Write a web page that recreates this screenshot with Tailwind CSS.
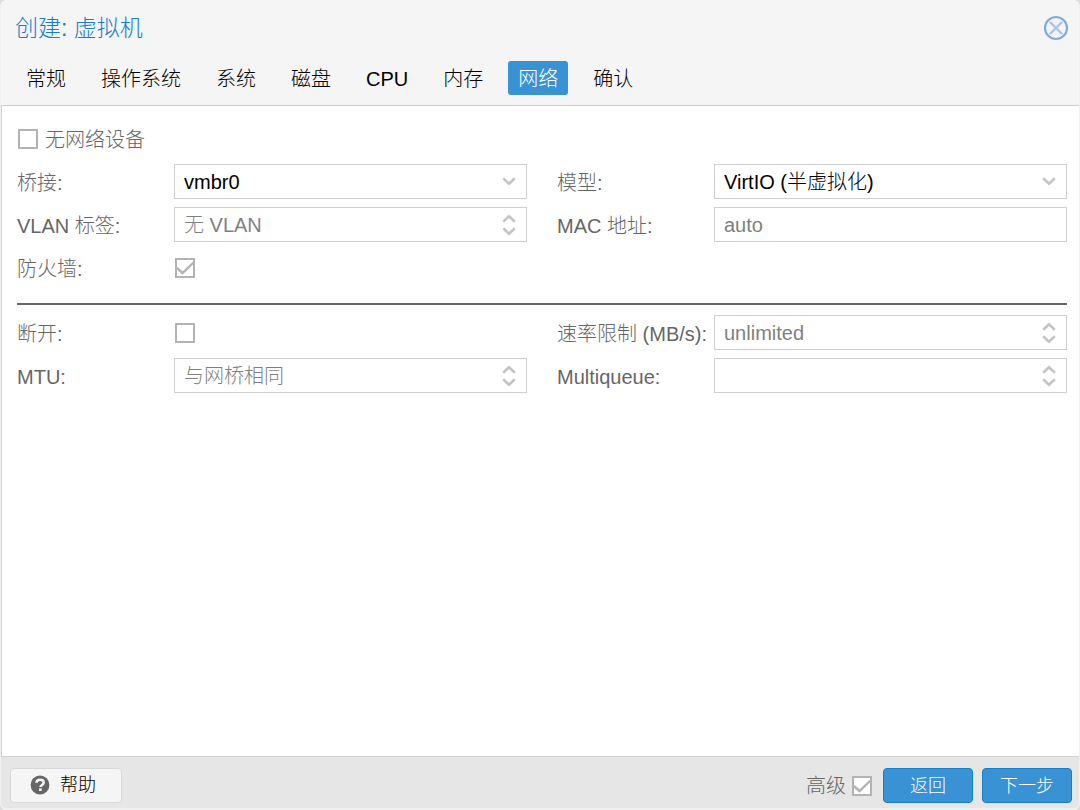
<!DOCTYPE html>
<html lang="zh-CN">
<head>
  <meta charset="UTF-8" />
  <meta name="viewport" content="width=device-width, initial-scale=1.0" />
  <title>创建: 虚拟机</title>
  <script src="https://cdn.jsdelivr.net/npm/@tailwindcss/browser@4"></script>
</head>
<body class="bg-[#dcdcdc] font-['Liberation_Sans','Noto_Sans_CJK_SC',sans-serif] font-light text-xl text-[#666]">
  <!-- shared glyphs -->
  <svg class="hidden">
    <symbol id="down" viewBox="0 0 14 9"><path d="M1.200 1.200 7 6.800l5.800-5.600" fill="none" stroke="currentColor" stroke-width="2.600" /></symbol>
    <symbol id="up" viewBox="0 0 14 9"><path d="M1.200 7.800 7 2.200l5.800 5.600" fill="none" stroke="currentColor" stroke-width="2.600" /></symbol>
    <symbol id="tick" viewBox="0 0 20 20"><path d="M2 10l5.500 5L18.500 4.500" fill="none" stroke="currentColor" stroke-width="2.400" /></symbol>
  </svg>

  <div class="flex min-h-screen flex-col rounded-md border-x border-[#f0f0f0] bg-[#f5f5f5]">
    <header class="border-b border-[#cfcfcf]">
      <div class="flex h-[55px] items-center justify-between pr-[10px] pl-[14px]">
        <h1 class="pt-[2px] text-[23px] text-[#157fcc]">创建: 虚拟机</h1>
        <button type="button" aria-label="关闭" class="size-[26px]">
          <svg viewBox="0 0 26 26" class="size-full">
            <circle cx="13" cy="13" r="11" fill="#f2f4fa" stroke="#84add6" stroke-width="2.200" />
            <path d="M7.500 7.500l11 11M18.500 7.500l-11 11" fill="none" stroke="#adc2e8" stroke-width="2.400" stroke-linecap="round" />
          </svg>
        </button>
      </div>
      <nav class="flex gap-[15px] px-[15px] pt-[6px] pb-[10px] text-black">
        <button type="button" class="h-[34px] rounded-[3px] px-[10px] pt-[2px]">常规</button>
        <button type="button" class="h-[34px] rounded-[3px] px-[10px] pt-[2px]">操作系统</button>
        <button type="button" class="h-[34px] rounded-[3px] px-[10px] pt-[2px]">系统</button>
        <button type="button" class="h-[34px] rounded-[3px] px-[10px] pt-[2px]">磁盘</button>
        <button type="button" class="h-[34px] rounded-[3px] px-[10px] pt-[2px]">CPU</button>
        <button type="button" class="h-[34px] rounded-[3px] px-[10px] pt-[2px]">内存</button>
        <button type="button" class="h-[34px] rounded-[3px] bg-[#3892d4] px-[10px] pt-[2px] text-white">网络</button>
        <button type="button" class="h-[34px] rounded-[3px] px-[10px] pt-[2px]">确认</button>
      </nav>
    </header>

    <main class="grow border-l border-[#cfcfcf] bg-white pt-[15px] pr-3 pl-[15px]">
      <form class="flex flex-col">
        <div class="flex h-[35px] items-center gap-[7px]">
          <input id="nonet" type="checkbox" class="ml-px size-5 appearance-none border-2 border-[#b3b3b3] bg-white" />
          <label for="nonet" class="pt-[2px]">无网络设备</label>
        </div>

        <div class="mt-2 grid grid-cols-2 gap-x-[30px] gap-y-2">
          <div class="flex h-[35px] items-center">
            <label for="bridge" class="w-[157px] shrink-0 pt-[2px]">桥接:</label>
            <div class="relative h-full grow">
              <select id="bridge" class="size-full appearance-none border border-[#cfcfcf] bg-white px-[9px] text-black">
                <option>vmbr0</option>
              </select>
              <svg class="pointer-events-none absolute top-[13px] right-[11px] h-[9px] w-[14px] text-[#c4c4c4]"><use href="#down" /></svg>
            </div>
          </div>
          <div class="flex h-[35px] items-center">
            <label for="model" class="w-[157px] shrink-0 pt-[2px]">模型:</label>
            <div class="relative h-full grow">
              <select id="model" class="size-full appearance-none border border-[#cfcfcf] bg-white px-[9px] text-black">
                <option>VirtIO (半虚拟化)</option>
              </select>
              <svg class="pointer-events-none absolute top-[13px] right-[11px] h-[9px] w-[14px] text-[#c4c4c4]"><use href="#down" /></svg>
            </div>
          </div>

          <div class="flex h-[35px] items-center">
            <label for="vlan" class="w-[157px] shrink-0 pt-[2px]">VLAN 标签:</label>
            <div class="flex h-full grow items-center border border-[#cfcfcf] pr-[10px] pl-[9px]">
              <input id="vlan" type="text" placeholder="无 VLAN" class="h-full min-w-0 grow pt-[2px] outline-none placeholder:text-[#7f7f7f]" />
              <div class="flex flex-col gap-1 text-[#c4c4c4]">
                <button type="button" aria-label="增加"><svg class="block h-[9px] w-[14px]"><use href="#up" /></svg></button>
                <button type="button" aria-label="减少"><svg class="block h-[9px] w-[14px]"><use href="#down" /></svg></button>
              </div>
            </div>
          </div>
          <div class="flex h-[35px] items-center">
            <label for="mac" class="w-[157px] shrink-0 pt-[2px]">MAC 地址:</label>
            <input id="mac" type="text" placeholder="auto" class="h-full min-w-0 grow border border-[#cfcfcf] px-[9px] pt-[2px] outline-none placeholder:text-[#7f7f7f]" />
          </div>

          <div class="flex h-[35px] items-center">
            <label for="firewall" class="w-[157px] shrink-0 pt-[2px]">防火墙:</label>
            <div class="relative ml-px size-5">
              <input id="firewall" type="checkbox" checked class="peer block size-full appearance-none border-2 border-[#b3b3b3] bg-white" />
              <svg class="pointer-events-none absolute inset-0 hidden size-full text-[#b3b3b3] peer-checked:block"><use href="#tick" /></svg>
            </div>
          </div>
        </div>

        <hr class="mt-[18px] mb-[10px] border-t-2 border-[#666]" />

        <div class="grid grid-cols-2 gap-x-[30px] gap-y-2">
          <div class="flex h-[35px] items-center">
            <label for="disconnect" class="w-[157px] shrink-0 pt-[2px]">断开:</label>
            <input id="disconnect" type="checkbox" class="ml-px size-5 appearance-none border-2 border-[#b3b3b3] bg-white" />
          </div>
          <div class="flex h-[35px] items-center">
            <label for="rate" class="w-[157px] shrink-0 pt-[2px]">速率限制 (MB/s):</label>
            <div class="flex h-full grow items-center border border-[#cfcfcf] pr-[10px] pl-[9px]">
              <input id="rate" type="text" placeholder="unlimited" class="h-full min-w-0 grow pt-[2px] outline-none placeholder:text-[#7f7f7f]" />
              <div class="flex flex-col gap-1 text-[#c4c4c4]">
                <button type="button" aria-label="增加"><svg class="block h-[9px] w-[14px]"><use href="#up" /></svg></button>
                <button type="button" aria-label="减少"><svg class="block h-[9px] w-[14px]"><use href="#down" /></svg></button>
              </div>
            </div>
          </div>

          <div class="flex h-[35px] items-center">
            <label for="mtu" class="w-[157px] shrink-0 pt-[2px]">MTU:</label>
            <div class="flex h-full grow items-center border border-[#cfcfcf] pr-[10px] pl-[9px]">
              <input id="mtu" type="text" placeholder="与网桥相同" class="h-full min-w-0 grow pt-[2px] outline-none placeholder:text-[#7f7f7f]" />
              <div class="flex flex-col gap-1 text-[#c4c4c4]">
                <button type="button" aria-label="增加"><svg class="block h-[9px] w-[14px]"><use href="#up" /></svg></button>
                <button type="button" aria-label="减少"><svg class="block h-[9px] w-[14px]"><use href="#down" /></svg></button>
              </div>
            </div>
          </div>
          <div class="flex h-[35px] items-center">
            <label for="queues" class="w-[157px] shrink-0 pt-[2px]">Multiqueue:</label>
            <div class="flex h-full grow items-center border border-[#cfcfcf] pr-[10px] pl-[9px]">
              <input id="queues" type="text" class="h-full min-w-0 grow pt-[2px] outline-none" />
              <div class="flex flex-col gap-1 text-[#c4c4c4]">
                <button type="button" aria-label="增加"><svg class="block h-[9px] w-[14px]"><use href="#up" /></svg></button>
                <button type="button" aria-label="减少"><svg class="block h-[9px] w-[14px]"><use href="#down" /></svg></button>
              </div>
            </div>
          </div>
        </div>
      </form>
    </main>

    <footer class="flex items-center rounded-b-md border-t border-b-2 border-t-[#cfcfcf] border-b-[#f0f0f0] bg-[#e6e6e6] pt-[11px] pr-[7px] pb-[5px] pl-[9px]">
      <button type="button" class="flex h-[35px] w-[112px] items-center justify-center gap-[10px] rounded-[4px] border border-[#d8d8d8] bg-[#f5f5f5] pr-[6px] pb-[2px] text-lg text-black">
        <svg viewBox="0 0 20 20" class="size-5">
          <circle cx="10" cy="10" r="9.400" fill="#666" />
          <path d="M6.300 7.800C6.700 5.700 8.200 4.800 10 4.800c2.100 0 3.700 1.100 3.700 2.900 0 2.400-3.200 2.200-3.200 4.400" fill="none" stroke="#f5f5f5" stroke-width="2.600" />
          <path d="M9 13.400h2.800v2.500H9z" fill="#f5f5f5" />
        </svg>
        帮助
      </button>
      <label for="advanced" class="ml-auto">高级</label>
      <div class="relative mr-[11px] ml-[6px] size-5">
        <input id="advanced" type="checkbox" checked class="peer block size-full appearance-none border-2 border-[#b3b3b3] bg-white" />
        <svg class="pointer-events-none absolute inset-0 hidden size-full text-[#b3b3b3] peer-checked:block"><use href="#tick" /></svg>
      </div>
      <button type="button" class="h-[35px] w-[90px] rounded-[4px] border border-[#157fcc] bg-[#3892d4] text-lg text-white">返回</button>
      <button type="button" class="ml-[9px] h-[35px] w-[90px] rounded-[4px] border border-[#157fcc] bg-[#3892d4] text-lg text-white">下一步</button>
    </footer>
  </div>
</body>
</html>
